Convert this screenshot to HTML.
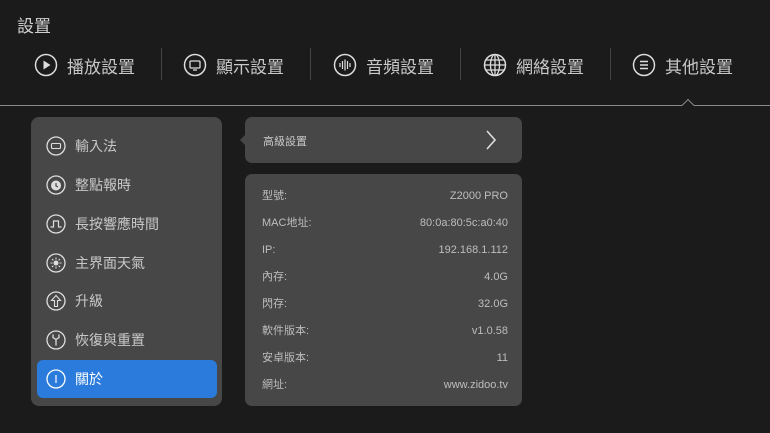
<!DOCTYPE html>
<html><head><meta charset="utf-8"><style>
*{margin:0;padding:0;box-sizing:border-box}
body{width:770px;height:433px;background:#1b1b1c;font-family:"Liberation Sans","Noto Sans CJK TC",sans-serif;color:#cfcfcf;position:relative;overflow:hidden}
.abs{position:absolute}
.title{left:17px;top:12px;font-size:17px;color:#d0d0d0}
.tab{top:52px;height:26px;display:flex;align-items:center;font-size:17px;color:#c8c8c8}
.tab svg{margin-right:9px}
.sep{top:48px;width:1px;height:32px;background:#444}
.panel{left:31px;top:117px;width:191px;height:289px;background:#474747;border-radius:8px}
.item{position:absolute;left:6px;width:180px;height:38px;display:flex;align-items:center;font-size:14px;color:#c8c8c8}
.item svg{margin-left:9px;margin-right:9px}
.sel{background:#2a7bdb;border-radius:6px;color:#fff}
.card{background:#474747;border-radius:7px;left:245px;width:277px}
.row{position:absolute;left:17px;right:14px;height:16px;line-height:16px;font-size:11px;color:#bdbdbd;display:flex;justify-content:space-between;align-items:baseline}
</style></head><body>
<div class="abs title">設置</div>

<div class="abs tab" style="left:34px"><svg width="24" height="24" viewBox="0 0 24 24"><circle cx="12" cy="12" r="10.5" fill="none" stroke="#ddd" stroke-width="1.5"/><path d="M9.5 7.5v9l7-4.5z" fill="#ddd"/></svg>播放設置</div>
<div class="abs sep" style="left:161px"></div>
<div class="abs tab" style="left:183px"><svg width="24" height="24" viewBox="0 0 24 24"><circle cx="12" cy="12" r="10.5" fill="none" stroke="#ddd" stroke-width="1.5"/><rect x="7" y="8" width="10" height="7" rx="1" fill="none" stroke="#ddd" stroke-width="1.3"/><path d="M10 17h4" stroke="#ddd" stroke-width="1.3"/></svg>顯示設置</div>
<div class="abs sep" style="left:310px"></div>
<div class="abs tab" style="left:333px"><svg width="24" height="24" viewBox="0 0 24 24"><circle cx="12" cy="12" r="10.5" fill="none" stroke="#ddd" stroke-width="1.5"/><path d="M7 10v4M9.5 8v8M12 6.5v11M14.5 8v8M17 10v4" stroke="#ddd" stroke-width="1.2"/></svg>音頻設置</div>
<div class="abs sep" style="left:460px"></div>
<div class="abs tab" style="left:483px"><svg width="24" height="24" viewBox="0 0 24 24"><circle cx="12" cy="12" r="10.5" fill="none" stroke="#ddd" stroke-width="1.5"/><ellipse cx="12" cy="12" rx="4.5" ry="10.5" fill="none" stroke="#ddd" stroke-width="1.3"/><path d="M12 1.5v21M1.5 12h21M3 7h18M3 17h18" stroke="#ddd" stroke-width="1.3"/></svg>網絡設置</div>
<div class="abs sep" style="left:610px"></div>
<div class="abs tab" style="left:632px"><svg width="24" height="24" viewBox="0 0 24 24"><circle cx="12" cy="12" r="10.5" fill="none" stroke="#ddd" stroke-width="1.5"/><path d="M8 8.5h8M8 12h8M8 15.5h8" stroke="#ddd" stroke-width="1.6"/></svg>其他設置</div>

<svg class="abs" style="left:0;top:97px" width="770" height="10"><path d="M0 8.5H682l6-6 6 6H770" fill="none" stroke="#8a8a8a" stroke-width="1"/></svg>

<div class="abs panel">
 <div class="item" style="top:10px"><svg width="20" height="20" viewBox="0 0 20 20"><circle cx="10" cy="10" r="9" fill="none" stroke="#ddd" stroke-width="1.3"/><rect x="5.5" y="7.5" width="9" height="5" rx="1" fill="none" stroke="#ddd" stroke-width="1.1"/></svg>輸入法</div>
 <div class="item" style="top:49px"><svg width="20" height="20" viewBox="0 0 20 20"><circle cx="10" cy="10" r="9" fill="none" stroke="#ddd" stroke-width="1.3"/><circle cx="10" cy="10.5" r="5" fill="#ddd"/><path d="M10 8v3l2 1" stroke="#474747" stroke-width="1.2" fill="none"/></svg>整點報時</div>
 <div class="item" style="top:88px"><svg width="20" height="20" viewBox="0 0 20 20"><circle cx="10" cy="10" r="9" fill="none" stroke="#ddd" stroke-width="1.3"/><path d="M4.5 13h3V7h5v6h3" stroke="#ddd" stroke-width="1.2" fill="none"/></svg>長按響應時間</div>
 <div class="item" style="top:127px"><svg width="20" height="20" viewBox="0 0 20 20"><circle cx="10" cy="10" r="9" fill="none" stroke="#ddd" stroke-width="1.3"/><circle cx="10" cy="10" r="2.5" fill="#ddd"/><path d="M10 4.5v2M10 13.5v2M4.5 10h2M13.5 10h2M6 6l1.4 1.4M12.6 12.6L14 14M6 14l1.4-1.4M12.6 7.4L14 6" stroke="#ddd" stroke-width="1.1"/></svg>主界面天氣</div>
 <div class="item" style="top:165px"><svg width="20" height="20" viewBox="0 0 20 20"><circle cx="10" cy="10" r="9" fill="none" stroke="#ddd" stroke-width="1.3"/><path d="M10 4.5l-4.5 5h3v6h3v-6h3z" stroke="#ddd" stroke-width="1.1" fill="none"/></svg>升級</div>
 <div class="item" style="top:204px"><svg width="20" height="20" viewBox="0 0 20 20"><circle cx="10" cy="10" r="9" fill="none" stroke="#ddd" stroke-width="1.3"/><path d="M7 4.5v3l3 2 3-2v-3M10 9.5v6" stroke="#ddd" stroke-width="1.3" fill="none"/></svg>恢復與重置</div>
 <div class="item sel" style="top:243px"><svg width="20" height="20" viewBox="0 0 20 20"><circle cx="10" cy="10" r="9" fill="none" stroke="#fff" stroke-width="1.3"/><path d="M10 6v8" stroke="#fff" stroke-width="1.2"/></svg>關於</div>
</div>

<div class="abs card" style="top:117px;height:46px">
 <svg class="abs" style="left:-5px;top:17px" width="6" height="12"><path d="M6 0L0 6l6 6z" fill="#474747"/></svg>
 <div class="abs" style="left:18px;top:16px;font-size:11px;color:#c8c8c8">高級設置</div>
 <svg class="abs" style="left:240px;top:12px" width="12" height="22"><path d="M2 2l8 9-8 9" stroke="#ddd" stroke-width="1.6" fill="none"/></svg>
</div>

<div class="abs card" style="top:174px;height:232px">
 <div class="row" style="top:14px"><span>型號:</span><span>Z2000 PRO</span></div>
 <div class="row" style="top:41px"><span>MAC地址:</span><span>80:0a:80:5c:a0:40</span></div>
 <div class="row" style="top:68px"><span>IP:</span><span>192.168.1.112</span></div>
 <div class="row" style="top:95px"><span>內存:</span><span>4.0G</span></div>
 <div class="row" style="top:122px"><span>閃存:</span><span>32.0G</span></div>
 <div class="row" style="top:149px"><span>軟件版本:</span><span>v1.0.58</span></div>
 <div class="row" style="top:176px"><span>安卓版本:</span><span>11</span></div>
 <div class="row" style="top:203px"><span>網址:</span><span>www.zidoo.tv</span></div>
</div>
</body></html>
